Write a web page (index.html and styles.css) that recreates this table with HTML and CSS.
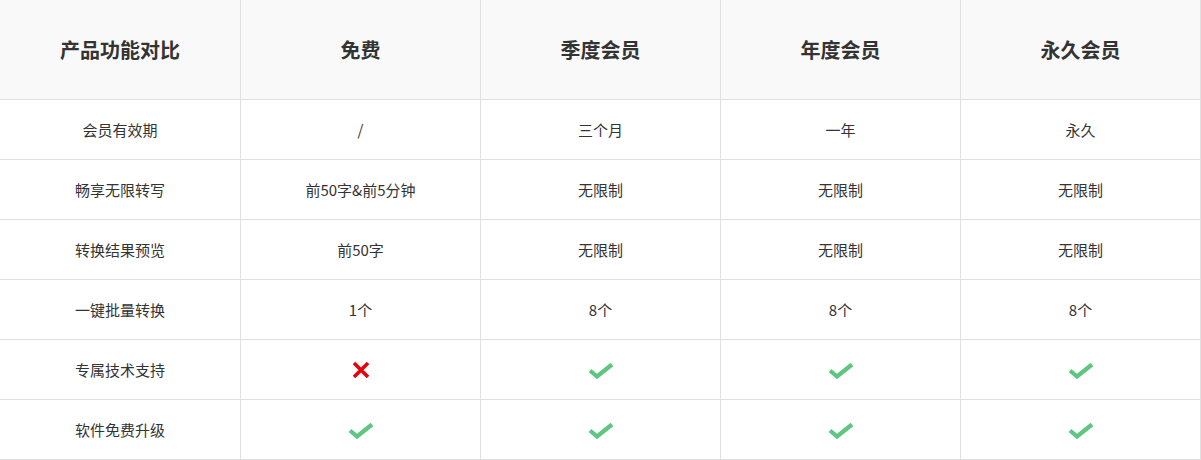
FILE: index.html
```html
<!DOCTYPE html>
<html lang="zh-CN">
<head>
<meta charset="utf-8">
<link rel="stylesheet" href="styles.css">
</head>
<body>
<table class="compare">
  <colgroup>
    <col class="col-first">
    <col class="col">
    <col class="col">
    <col class="col">
    <col class="col">
  </colgroup>
  <thead>
    <tr>
      <th>产品功能对比</th>
      <th>免费</th>
      <th>季度会员</th>
      <th>年度会员</th>
      <th>永久会员</th>
    </tr>
  </thead>
  <tbody>
    <tr><td>会员有效期</td><td>/</td><td>三个月</td><td>一年</td><td>永久</td></tr>
    <tr><td>畅享无限转写</td><td>前50字&amp;前5分钟</td><td>无限制</td><td>无限制</td><td>无限制</td></tr>
    <tr><td>转换结果预览</td><td>前50字</td><td>无限制</td><td>无限制</td><td>无限制</td></tr>
    <tr><td>一键批量转换</td><td>1个</td><td>8个</td><td>8个</td><td>8个</td></tr>
    <tr>
      <td>专属技术支持</td>
      <td><svg class="icon" width="18" height="18" viewBox="0 0 18 18"><path d="M2 2L16 16M16 2L2 16" stroke="#e8000b" stroke-width="3.6" fill="none"/></svg></td>
      <td><svg class="icon" width="26" height="18" viewBox="0 0 26 18"><path d="M2 9.5L9 15.5L24 3.5" stroke="#5ec77f" stroke-width="4.2" fill="none"/></svg></td>
      <td><svg class="icon" width="26" height="18" viewBox="0 0 26 18"><path d="M2 9.5L9 15.5L24 3.5" stroke="#5ec77f" stroke-width="4.2" fill="none"/></svg></td>
      <td><svg class="icon" width="26" height="18" viewBox="0 0 26 18"><path d="M2 9.5L9 15.5L24 3.5" stroke="#5ec77f" stroke-width="4.2" fill="none"/></svg></td>
    </tr>
    <tr>
      <td>软件免费升级</td>
      <td><svg class="icon" width="26" height="18" viewBox="0 0 26 18"><path d="M2 9.5L9 15.5L24 3.5" stroke="#5ec77f" stroke-width="4.2" fill="none"/></svg></td>
      <td><svg class="icon" width="26" height="18" viewBox="0 0 26 18"><path d="M2 9.5L9 15.5L24 3.5" stroke="#5ec77f" stroke-width="4.2" fill="none"/></svg></td>
      <td><svg class="icon" width="26" height="18" viewBox="0 0 26 18"><path d="M2 9.5L9 15.5L24 3.5" stroke="#5ec77f" stroke-width="4.2" fill="none"/></svg></td>
      <td><svg class="icon" width="26" height="18" viewBox="0 0 26 18"><path d="M2 9.5L9 15.5L24 3.5" stroke="#5ec77f" stroke-width="4.2" fill="none"/></svg></td>
    </tr>
  </tbody>
</table>
</body>
</html>
```
FILE: styles.css
```css
html, body {
  margin: 0;
  padding: 0;
  background: #fff;
}
.compare {
  border-collapse: separate;
  border-spacing: 0;
  width: 1201px;
  table-layout: fixed;
  font-family: "Microsoft YaHei", "Noto Sans CJK SC", "Noto Sans", sans-serif;
  color: #333;
}
.col-first {
  width: 241px;
}
.col {
  width: 240px;
}
.compare th,
.compare td {
  border-right: 1px solid #e0e0e0;
  border-bottom: 1px solid #e0e0e0;
  text-align: center;
  vertical-align: middle;
  padding: 0;
}
.compare th {
  height: 99px;
  background: #f9f9f9;
  font-size: 20px;
  font-weight: bold;
}
.compare td {
  height: 59px;
  font-size: 15px;
}
.icon {
  display: block;
  margin: 0 auto;
}
```
